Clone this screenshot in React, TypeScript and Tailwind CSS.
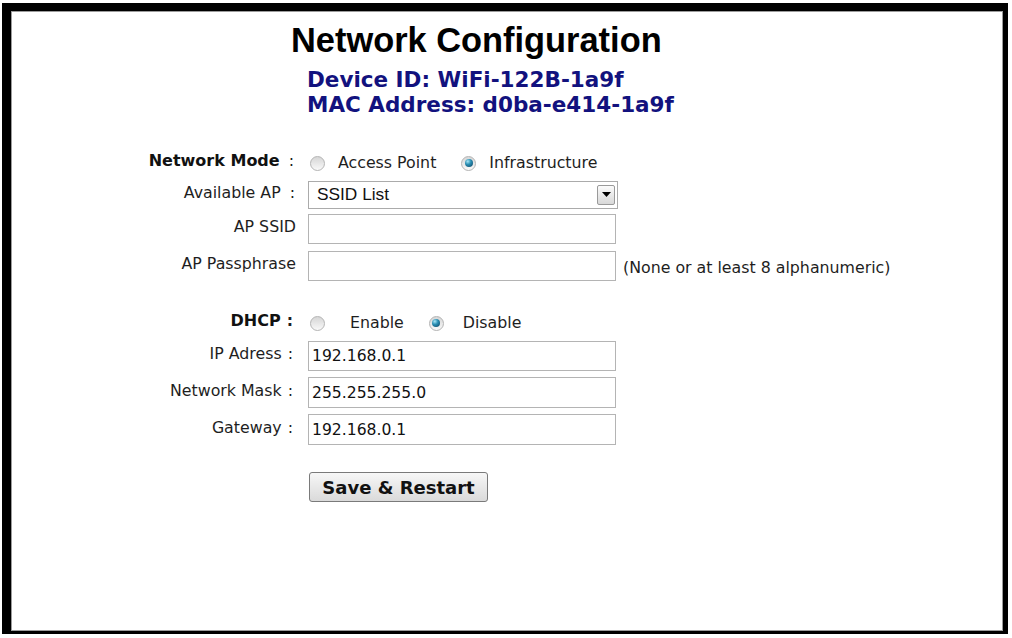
import React from "react";

function Radio({ checked, className }: { checked?: boolean; className?: string }) {
  return (
    <span
      className={
        "flex items-center justify-center w-[15px] h-[15px] rounded-full border border-[#b4b4b4] bg-[linear-gradient(180deg,#d6d6d6,#f9f9f9)] shrink-0 " +
        (className ?? "")
      }
    >
      {checked && (
        <span className="block w-[8px] h-[8px] rounded-full bg-[radial-gradient(circle_at_35%_30%,#a8e6f6_0%,#2a8fb4_40%,#0c3f5e_100%)]" />
      )}
    </span>
  );
}

function Field({ value }: { value?: string }) {
  return (
    <input
      readOnly
      defaultValue={value ?? ""}
      className="w-[308px] h-full border border-[#b4b4b4] bg-white pl-[3px] text-[15.6px] text-[#111] outline-none font-['DejaVu_Sans',sans-serif]"
    />
  );
}

function Row({
  label,
  children,
  className,
}: {
  label: React.ReactNode;
  children: React.ReactNode;
  className: string;
}) {
  return (
    <div className={"grid grid-cols-[284px_1fr] gap-x-[12px] items-center " + className}>
      <div className="text-right pb-[4px] whitespace-nowrap">{label}</div>
      <div className="flex items-center h-full">{children}</div>
    </div>
  );
}

export default function App() {
  return (
    <div className="w-[1012px] h-[638px] bg-white pt-[3px] pl-[2px] pr-[4px] pb-[4px]">
      <div className="h-full border-black border-t-[8px] border-l-[9px] border-r-[5px] border-b-[3px]">
        <div className="h-full border border-[#9c9c9c] bg-white font-['DejaVu_Sans',sans-serif] text-[15.8px] text-[#1e1e1e] pt-[9px]">
          <h1 className="pl-[279px] font-['Liberation_Sans',Arial,sans-serif] font-bold text-[34.4px] leading-[38px] text-black">
            Network Configuration
          </h1>
          <div className="mt-[8px] pl-[295px] font-bold text-[21.5px] leading-[25px] text-[#12127e]">
            <div>Device ID: WiFi-122B-1a9f</div>
            <div>MAC Address: d0ba-e414-1a9f</div>
          </div>

          <Row
            className="mt-[32px] h-[24px]"
            label={
              <>
                <span className="font-bold text-[16px] text-[#111]">Network Mode</span>
                <span className="ml-[9px] mr-[2px]">:</span>
              </>
            }
          >
            <Radio className="ml-[2px]" />
            <span className="ml-[13px]">Access Point</span>
            <Radio checked className="ml-[25px]" />
            <span className="ml-[13px]">Infrastructure</span>
          </Row>

          <Row
            className="mt-[8px] h-[26px]"
            label={
              <>
                <span>Available AP</span>
                <span className="ml-[9px] mr-[1px]">:</span>
              </>
            }
          >
            <div className="w-[310px] h-full border border-[#ababab] bg-white flex items-center justify-between pl-[8px] pr-[2px]">
              <span className="font-['Liberation_Sans',Arial,sans-serif] text-[17.3px] text-[#111]">SSID List</span>
              <span className="w-[18px] h-[20px] border border-[#9a9a9a] rounded-[2px] bg-[linear-gradient(180deg,#fbfbfb,#d8d8d8)] flex items-center justify-center">
                <svg width="9" height="5" viewBox="0 0 9 5">
                  <path d="M0 0h9L4.5 5z" fill="#000" />
                </svg>
              </span>
            </div>
          </Row>

          <Row className="mt-[7px] h-[30px]" label={<span>AP SSID</span>}>
            <Field />
          </Row>

          <Row className="mt-[7px] h-[30px]" label={<span>AP Passphrase</span>}>
            <Field />
            <span className="ml-[7px] pt-[3px]">(None or at least 8 alphanumeric)</span>
          </Row>

          <Row
            className="mt-[28px] h-[24px]"
            label={
              <>
                <span className="font-bold text-[16px] text-[#111]">DHCP</span>
                <span className="ml-[6px] mr-[3px] font-bold">:</span>
              </>
            }
          >
            <Radio className="ml-[2px]" />
            <span className="ml-[25px]">Enable</span>
            <Radio checked className="ml-[25px]" />
            <span className="ml-[19px]">Disable</span>
          </Row>

          <Row
            className="mt-[8px] h-[30px]"
            label={
              <>
                <span>IP Adress</span>
                <span className="ml-[6px] mr-[3px]">:</span>
              </>
            }
          >
            <Field value="192.168.0.1" />
          </Row>

          <Row
            className="mt-[6px] h-[31px]"
            label={
              <>
                <span>Network Mask</span>
                <span className="ml-[6px] mr-[3px]">:</span>
              </>
            }
          >
            <Field value="255.255.255.0" />
          </Row>

          <Row
            className="mt-[6px] h-[31px]"
            label={
              <>
                <span>Gateway</span>
                <span className="ml-[6px] mr-[3px]">:</span>
              </>
            }
          >
            <Field value="192.168.0.1" />
          </Row>

          <div className="mt-[27px] pl-[297px]">
            <button className="w-[179px] h-[30px] border border-[#7a7a7a] rounded-[3px] bg-[linear-gradient(180deg,#f7f7f7,#dadada)] font-bold text-[18px] text-[#111] font-['DejaVu_Sans',sans-serif]">
              Save &amp; Restart
            </button>
          </div>
        </div>
      </div>
    </div>
  );
}
